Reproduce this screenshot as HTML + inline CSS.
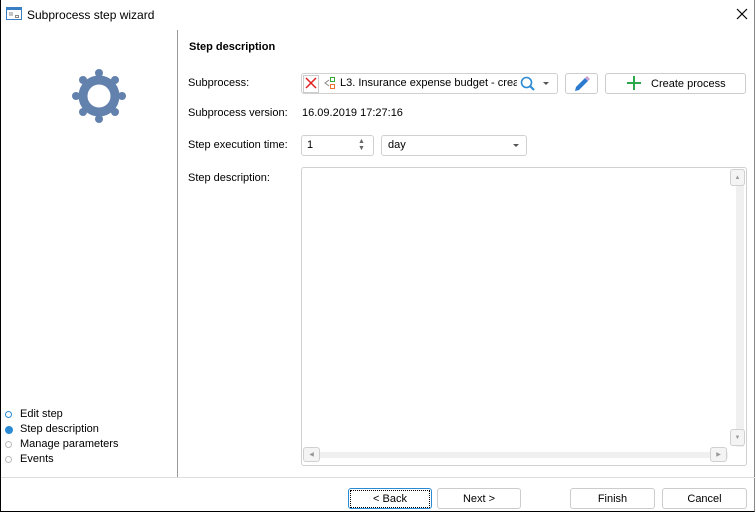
<!DOCTYPE html><html><head><style>
body{margin:0;width:756px;height:513px;overflow:hidden;font-family:"Liberation Sans",sans-serif;font-size:11px;line-height:15px;color:#000;background:#fff;position:relative}
.a{position:absolute}
.b{position:absolute;border:1px solid #d0d0d0;border-radius:3px;background:#fff;box-sizing:border-box}
.btn{position:absolute;border:1px solid #ccc;border-radius:3px;background:#fff;box-sizing:border-box;text-align:center;line-height:20px}
</style></head><body>
<div class="a" style="left:0;top:0;width:755px;height:512px;border-right:1px solid #888;border-left:1px solid #000;border-bottom:1px solid #000;box-sizing:border-box"></div>
<svg class="a" style="left:6px;top:7px" width="16" height="14"><rect x="0.5" y="0.5" width="15" height="12" fill="#fff" stroke="#3a7ec4"/><rect x="1" y="1" width="14" height="2" fill="#3a7ec4"/><line x1="3" y1="6" x2="7" y2="6" stroke="#888"/><line x1="3" y1="8" x2="7" y2="8" stroke="#888"/><rect x="9.5" y="8.5" width="3" height="2" fill="none" stroke="#888"/></svg>
<div class="a" style="left:27px;top:7px;font-size:12px;line-height:17px">Subprocess step wizard</div>
<svg class="a" style="left:736px;top:8px" width="12" height="12"><path d="M1 1 L11 11 M11 1 L1 11" stroke="#000" stroke-width="1.2"/></svg>
<div class="a" style="left:177px;top:30px;width:1px;height:447px;background:#999"></div>
<div class="a" style="left:1px;top:477px;width:754px;height:1px;background:#ddd"></div>
<svg class="a" style="left:70px;top:68px" width="58" height="58"><g fill="#6381ad"><circle cx="29" cy="28" r="16" fill="none" stroke="#6381ad" stroke-width="9"/>
<circle cx="29" cy="5" r="4"/><circle cx="29" cy="51" r="4"/><circle cx="6" cy="28" r="4"/><circle cx="52" cy="28" r="4"/>
<circle cx="13" cy="12" r="4"/><circle cx="45" cy="12" r="4"/><circle cx="13" cy="44" r="4"/><circle cx="45" cy="44" r="4"/></g></svg>
<div class="a" style="left:5px;top:411px;width:5px;height:5px;border:1.5px solid #2a8ad4;border-radius:50%"></div>
<div class="a" style="left:5px;top:426px;width:8px;height:8px;background:#2a8ad4;border-radius:50%"></div>
<div class="a" style="left:5px;top:441px;width:5px;height:5px;border:1.5px solid #bbb;border-radius:50%"></div>
<div class="a" style="left:5px;top:456px;width:5px;height:5px;border:1.5px solid #bbb;border-radius:50%"></div>
<div class="a" style="left:20px;top:407px">Edit step</div>
<div class="a" style="left:20px;top:422px">Step description</div>
<div class="a" style="left:20px;top:437px">Manage parameters</div>
<div class="a" style="left:20px;top:452px">Events</div>
<div class="a" style="left:189px;top:40px;font-weight:bold">Step description</div>
<div class="a" style="left:188px;top:76px">Subprocess:</div>
<div class="a" style="left:188px;top:106px">Subprocess version:</div>
<div class="a" style="left:188px;top:138px">Step execution time:</div>
<div class="a" style="left:188px;top:171px">Step description:</div>
<div class="b" style="left:301px;top:73px;width:257px;height:21px"></div>
<div class="a" style="left:303px;top:75px;width:14px;height:16px;border:1px solid #ccc"></div>
<svg class="a" style="left:305px;top:77px" width="12" height="12"><path d="M1 1 L11 11 M11 1 L1 11" stroke="#e02020" stroke-width="1.5"/></svg>
<svg class="a" style="left:324px;top:77px" width="12" height="13"><rect x="6.5" y="0.5" width="4" height="4" fill="none" stroke="#3aa63a"/><rect x="6.5" y="7.5" width="4" height="4" fill="none" stroke="#f07030"/><path d="M5 3 L1 6 L5 9" fill="none" stroke="#888"/></svg>
<div class="a" style="left:340px;top:76px;width:177px;overflow:hidden;white-space:nowrap">L3. Insurance expense budget - create</div>
<svg class="a" style="left:520px;top:76px" width="16" height="16"><circle cx="6.5" cy="6.5" r="5" fill="none" stroke="#2a8ad4" stroke-width="1.6"/><line x1="10" y1="10" x2="14" y2="14" stroke="#2a8ad4" stroke-width="2"/></svg>
<div class="a" style="left:543px;top:82px;border-left:3px solid transparent;border-right:3px solid transparent;border-top:3px solid #555"></div>
<div class="btn" style="left:565px;top:73px;width:33px;height:21px"></div>
<svg class="a" style="left:573px;top:75px" width="18" height="18"><path d="M2 16 L3 12 L12 3 L15 6 L6 15 Z" fill="#2a7ad0"/><path d="M12 3 L14 1 L17 4 L15 6 Z" fill="#c9a0d0"/></svg>
<div class="btn" style="left:605px;top:73px;width:141px;height:21px"></div>
<svg class="a" style="left:627px;top:76px" width="14" height="14"><path d="M7 0 V14 M0 7 H14" stroke="#2aa84a" stroke-width="2"/></svg>
<div class="a" style="left:651px;top:77px">Create process</div>
<div class="a" style="left:302px;top:106px">16.09.2019 17:27:16</div>
<div class="b" style="left:301px;top:135px;width:73px;height:21px"></div>
<div class="a" style="left:307px;top:138px">1</div>
<div class="a" style="left:358px;top:138px;font-size:7px;color:#666;line-height:7px">▲<br>▼</div>
<div class="b" style="left:381px;top:135px;width:146px;height:21px"></div>
<div class="a" style="left:388px;top:138px">day</div>
<div class="a" style="left:513px;top:144px;border-left:3px solid transparent;border-right:3px solid transparent;border-top:3px solid #555"></div>
<div class="b" style="left:301px;top:167px;width:446px;height:299px"></div>
<div class="a" style="left:736px;top:169px;width:8px;height:278px;background:#f0f0f0"></div>
<div class="b" style="left:730px;top:169px;width:15px;height:17px;background:#f4f4f4;font-size:6px;color:#999;text-align:center;line-height:16px">▲</div>
<div class="b" style="left:730px;top:429px;width:15px;height:17px;background:#f4f4f4;font-size:6px;color:#999;text-align:center;line-height:16px">▼</div>
<div class="a" style="left:303px;top:452px;width:425px;height:6px;background:#f0f0f0"></div>
<div class="b" style="left:303px;top:447px;width:17px;height:15px;background:#f4f4f4;font-size:6px;color:#999;text-align:center;line-height:14px">◀</div>
<div class="b" style="left:710px;top:447px;width:17px;height:15px;background:#f4f4f4;font-size:6px;color:#999;text-align:center;line-height:14px">▶</div>
<div class="btn" style="left:348px;top:488px;width:84px;height:21px;border-color:#2a8ad4"><div style="border:1px dotted #000;margin:1px;line-height:16px">&lt; Back</div></div>
<div class="btn" style="left:437px;top:488px;width:84px;height:21px">Next &gt;</div>
<div class="btn" style="left:570px;top:488px;width:85px;height:21px">Finish</div>
<div class="btn" style="left:662px;top:488px;width:85px;height:21px">Cancel</div>
</body></html>
